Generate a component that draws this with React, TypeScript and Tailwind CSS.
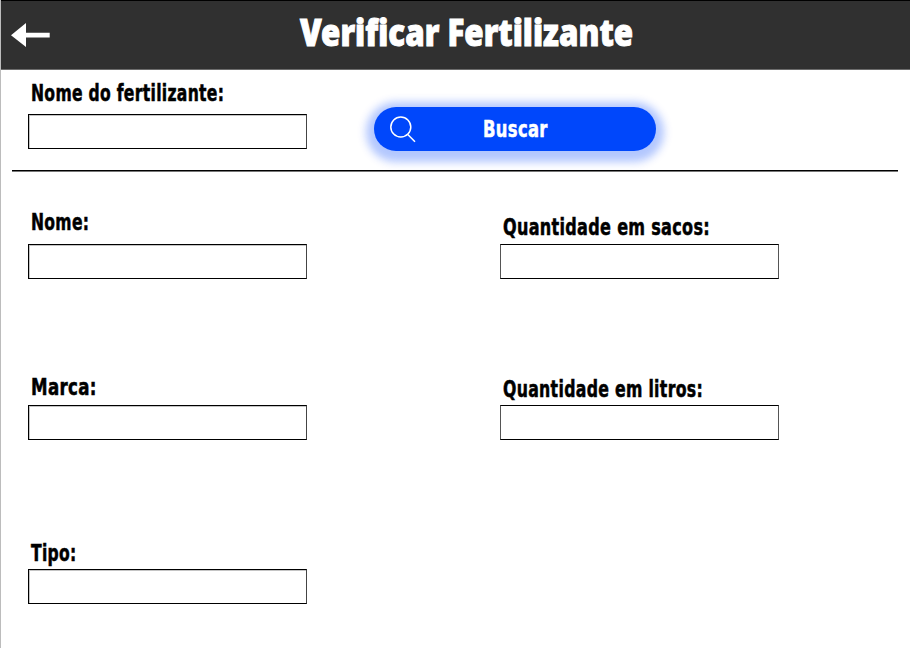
import { useLayoutEffect, useRef, useState } from "react";

type FitTextProps = { text: string; width: number; className: string };

/* Squeezes a line of text horizontally so that it fills the given width. */
function FitText({ text, width, className }: FitTextProps) {
  const ref = useRef<HTMLSpanElement>(null);
  const [scale, setScale] = useState(1);
  useLayoutEffect(() => {
    if (ref.current) setScale(width / ref.current.offsetWidth);
  }, [text, width]);
  return (
    <span className="block whitespace-nowrap" style={{ width }}>
      <span
        ref={ref}
        className={`inline-block origin-left ${className}`}
        style={{ transform: `scaleX(${scale})` }}
      >
        {text}
      </span>
    </span>
  );
}

const labelFont =
  "font-['DejaVu_Sans_Condensed','DejaVu_Sans',sans-serif] font-bold text-[23px] leading-[26px] tracking-[0.4px] [-webkit-text-stroke:0.5px_currentColor]";

type FieldProps = { label: string; width: number; gap: string; edges: string };

function Field({ label, width, gap, edges }: FieldProps) {
  return (
    <label className={`flex w-[279px] flex-col ${gap}`}>
      <span className="pl-[3px]">
        <FitText text={label} width={width} className={`${labelFont} text-black`} />
      </span>
      <input className={`block h-[35px] w-full border border-black bg-white px-2 outline-none ${edges}`} />
    </label>
  );
}

const leftEdges = "border-r-[#444] shadow-[inset_1px_1px_0_#c4c4c4]";
const rightEdges = "border-x-[#555]";

export default function App() {
  return (
    <div className="flex h-[648px] w-[910px] flex-col overflow-hidden border-l border-[#bcbcbc] bg-white">
      <header className="-ml-px flex h-[70px] shrink-0 border-b border-t border-b-[#6c6c6c] border-t-black bg-[#303030] pl-[11px]">
        <button className="mt-[22px] h-6 w-[39px]" aria-label="Voltar">
          <svg width="39" height="24" viewBox="0 0 39 24" fill="white">
            <path d="M0 12.2 15 0v9.7h23.7v4.8H15v9.5z" />
          </svg>
        </button>
        <h1 className="ml-[250px] mt-[8px]">
          <FitText
            text="Verificar Fertilizante"
            width={333}
            className="font-['Noto_Sans','Open_Sans',sans-serif] text-[37px] font-black leading-[46px] text-white [-webkit-text-stroke:1px_white]"
          />
        </h1>
      </header>

      <section className="ml-[11px] flex h-[102px] w-[886px] shrink-0 border-b border-[#777] pl-4 pt-[10px] shadow-[inset_0_-1px_0_#000]">
        <Field label="Nome do fertilizante:" width={193} gap="gap-[7px]" edges={leftEdges} />
        <button className="ml-[67px] mt-[27px] flex h-11 w-[282px] items-center rounded-full bg-[#0047fb] pl-4 shadow-[0_3px_8px_8px_rgba(0,71,251,0.3)]">
          <svg width="26" height="27" viewBox="0 0 26 27" fill="none" stroke="white" strokeWidth="1.5">
            <circle cx="10.8" cy="11" r="10" />
            <path d="m17.8 18.4 7.2 7.4" />
          </svg>
          <span className="ml-[67px]">
            <FitText text="Buscar" width={65} className={`${labelFont} text-white`} />
          </span>
        </button>
      </section>

      <main className="ml-[27px] grid grid-cols-[279px_279px] gap-x-[193px]">
        <div className="flex flex-col pt-[37px]">
          <Field label="Nome:" width={58} gap="gap-[8px]" edges={leftEdges} />
          <div className="mt-[95px]">
            <Field label="Marca:" width={66} gap="gap-[4px]" edges={leftEdges} />
          </div>
          <div className="mt-[100px]">
            <Field label="Tipo:" width={46} gap="gap-[2px]" edges={leftEdges} />
          </div>
        </div>
        <div className="flex flex-col pt-[42px]">
          <Field label="Quantidade em sacos:" width={207} gap="gap-[3px]" edges={rightEdges} />
          <div className="mt-[97px]">
            <Field label="Quantidade em litros:" width={200} gap="gap-[2px]" edges={rightEdges} />
          </div>
        </div>
      </main>
    </div>
  );
}
